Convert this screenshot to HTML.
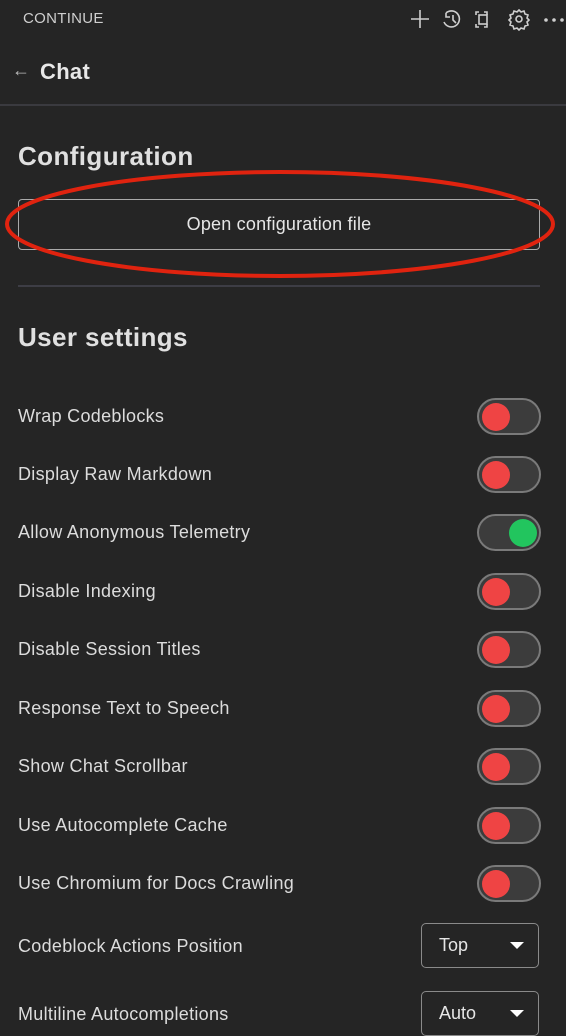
<!DOCTYPE html>
<html><head><style>
body{margin:0;width:566px;height:1024px;background:#252525;overflow:hidden;font-family:"Liberation Sans",sans-serif;color:#e6e6e6;position:relative}
.a{position:absolute}
.row{position:absolute;left:18px;font-size:18px;letter-spacing:0.3px;color:#dcdcdc}
.tg{position:absolute;left:477px;width:60px;height:33px;border:2px solid #7a7a7a;border-radius:20px;background:#3c3c3c}
.tg i{position:absolute;top:2.5px;width:28px;height:28px;border-radius:50%;background:#ef4444}
.tg.on i{background:#22c55e;right:2.5px}
.tg.off i{left:2.5px}
.dd{position:absolute;left:421px;width:116px;height:43px;border:1.5px solid #8a8a8a;border-radius:5px;font-size:18px}
.dd span{position:absolute;left:17px;top:11px}
.dd b{position:absolute;right:14px;top:18px;border-left:7px solid transparent;border-right:7px solid transparent;border-top:7px solid #fff}
h2{position:absolute;left:18px;margin:0;font-size:26px;font-weight:bold;color:#e0e0e0;letter-spacing:0.4px}
</style></head><body>
<div class="a" style="left:23px;top:10px;font-size:15px;color:#cfcfcf;letter-spacing:0.3px">CONTINUE</div>
<svg class="a" style="left:405px;top:6px" width="161" height="26" viewBox="0 0 161 26" fill="none" stroke="#cfcfcf" stroke-width="1.6">
<path d="M15 4v18M6 13h18"/>
<path d="M41 7a8 8 0 1 1-2 9M41 7v4h4M48 9v5l3 3"/>
<path d="M74 6h-3v3M79 6h3v3M74 21h-3v-3M79 21h3v-3"/><rect x="74" y="9" width="8" height="9"/>
<circle cx="114" cy="13" r="3"/><path d="M114 4l2 2 3-1 1 3 3 1-1 3 2 2-2 2 1 3-3 1-1 3-3-1-2 2-2-2-3 1-1-3-3-1 1-3-2-2 2-2-1-3 3-1 1-3 3 1z"/>
<circle cx="141" cy="14" r="1" fill="#cfcfcf"/><circle cx="149" cy="14" r="1" fill="#cfcfcf"/><circle cx="157" cy="14" r="1" fill="#cfcfcf"/>
</svg>
<div class="a" style="left:12px;top:60px;font-size:18px;color:#bbb">←</div>
<div class="a" style="left:40px;top:59px;font-size:22px;font-weight:bold;color:#e8e8e8;letter-spacing:0.3px">Chat</div>
<div class="a" style="left:0;top:104px;width:566px;height:2px;background:#3a3a3f"></div>
<h2 style="top:141px">Configuration</h2>
<div class="a" style="left:18px;top:199px;width:520px;height:49px;border:1.5px solid #aaa;border-radius:4px;font-size:18px;letter-spacing:0.2px;text-align:center;line-height:49px;color:#e6e6e6">Open configuration file</div>
<svg class="a" style="left:0;top:165px" width="566" height="120"><ellipse cx="280" cy="59" rx="273" ry="52" fill="none" stroke="#e0230f" stroke-width="4"/></svg>
<div class="a" style="left:18px;top:285px;width:522px;height:2px;background:#3d3d45"></div>
<h2 style="top:322px">User settings</h2>

<div class="row" style="top:406px">Wrap Codeblocks</div><div class="tg off" style="top:398px"><i></i></div>
<div class="row" style="top:464px">Display Raw Markdown</div><div class="tg off" style="top:456px"><i></i></div>
<div class="row" style="top:522px">Allow Anonymous Telemetry</div><div class="tg on" style="top:514px"><i></i></div>
<div class="row" style="top:581px">Disable Indexing</div><div class="tg off" style="top:573px"><i></i></div>
<div class="row" style="top:639px">Disable Session Titles</div><div class="tg off" style="top:631px"><i></i></div>
<div class="row" style="top:698px">Response Text to Speech</div><div class="tg off" style="top:690px"><i></i></div>
<div class="row" style="top:756px">Show Chat Scrollbar</div><div class="tg off" style="top:748px"><i></i></div>
<div class="row" style="top:815px">Use Autocomplete Cache</div><div class="tg off" style="top:807px"><i></i></div>
<div class="row" style="top:873px">Use Chromium for Docs Crawling</div><div class="tg off" style="top:865px"><i></i></div>
<div class="row" style="top:936px">Codeblock Actions Position</div><div class="dd" style="top:923px"><span>Top</span><b></b></div>
<div class="row" style="top:1004px">Multiline Autocompletions</div><div class="dd" style="top:991px"><span>Auto</span><b></b></div>
</body></html>
